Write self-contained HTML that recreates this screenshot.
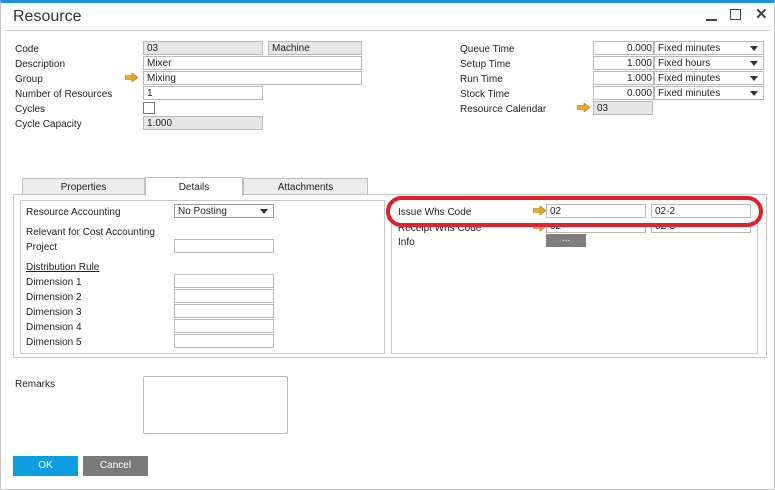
<!DOCTYPE html>
<html><head><style>
*{box-sizing:border-box;margin:0;padding:0}
body{width:775px;height:490px;background:#fff;font-family:"Liberation Sans",sans-serif;font-size:10px;color:#222;position:relative;overflow:hidden}
.a{position:absolute;white-space:nowrap}
.l{position:absolute;line-height:12px;margin-top:2px}
.f{position:absolute;height:14px;border:1px solid #b8b8b8;background:#fff;padding:1px 3px 0;line-height:12px}
.g{background:#e6e6e6}
.dd::after{content:"";position:absolute;right:5px;top:4px;border-left:4px solid transparent;border-right:4px solid transparent;border-top:5px solid #333}
.arr{position:absolute;width:13px;height:9px}
</style></head><body>
<div class="a" style="left:0;top:0;width:775px;height:490px;border:1px solid #c8c8c8;border-top:3px solid #1a8fd6"></div>
<div class="a" style="left:13px;top:8px;font-size:16px;color:#333">Resource</div>
<div class="a" style="left:5px;top:30px;width:765px;height:1px;background:#d0d0d0"></div>
<div class="a" style="left:706px;top:19px;width:11px;height:2px;background:#444"></div>
<div class="a" style="left:730px;top:9px;width:11px;height:11px;border:1.5px solid #444"></div>
<div class="a" style="left:755px;top:5px;font-size:15px;font-weight:bold;color:#444">✕</div>

<div class="l" style="left:15px;top:42px">Code</div>
<div class="l" style="left:15px;top:57px">Description</div>
<div class="l" style="left:15px;top:72px">Group</div>
<div class="l" style="left:15px;top:87px">Number of Resources</div>
<div class="l" style="left:15px;top:102px">Cycles</div>
<div class="l" style="left:15px;top:117px">Cycle Capacity</div>
<div class="f g" style="left:143px;top:41px;width:120px">03</div>
<div class="f g" style="left:268px;top:41px;width:94px">Machine</div>
<div class="f" style="left:143px;top:56px;width:219px">Mixer</div>
<svg class="arr" style="left:125px;top:73px" viewBox="0 0 13 9"><path d="M0 2.5h7V0l6 4.5-6 4.5V6.5H0z" fill="#e8a820" stroke="#a87010" stroke-width=".6"/></svg>
<div class="f" style="left:143px;top:71px;width:219px">Mixing</div>
<div class="f" style="left:143px;top:86px;width:120px">1</div>
<div class="f" style="left:143px;top:102px;width:12px;height:12px;border-color:#777"></div>
<div class="f g" style="left:143px;top:116px;width:120px">1.000</div>

<div class="l" style="left:460px;top:42px">Queue Time</div>
<div class="l" style="left:460px;top:57px">Setup Time</div>
<div class="l" style="left:460px;top:72px">Run Time</div>
<div class="l" style="left:460px;top:87px">Stock Time</div>
<div class="l" style="left:460px;top:102px">Resource Calendar</div>
<div class="f" style="left:593px;top:41px;width:61px;text-align:right;padding-right:1px">0.000</div>
<div class="f" style="left:593px;top:56px;width:61px;text-align:right;padding-right:1px">1.000</div>
<div class="f" style="left:593px;top:71px;width:61px;text-align:right;padding-right:1px">1.000</div>
<div class="f" style="left:593px;top:86px;width:61px;text-align:right;padding-right:1px">0.000</div>
<div class="f dd" style="left:654px;top:41px;width:110px">Fixed minutes</div>
<div class="f dd" style="left:654px;top:56px;width:110px">Fixed hours</div>
<div class="f dd" style="left:654px;top:71px;width:110px">Fixed minutes</div>
<div class="f dd" style="left:654px;top:86px;width:110px">Fixed minutes</div>
<svg class="arr" style="left:577px;top:103px" viewBox="0 0 13 9"><path d="M0 2.5h7V0l6 4.5-6 4.5V6.5H0z" fill="#e8a820" stroke="#a87010" stroke-width=".6"/></svg>
<div class="f g" style="left:593px;top:101px;width:60px">03</div>

<div class="a" style="left:13px;top:194px;width:754px;height:164px;border:1px solid #c8c8c8"></div>
<div class="a" style="left:22px;top:178px;width:123px;height:17px;background:#ececec;border:1px solid #c0c0c0;text-align:center;line-height:17px">Properties</div>
<div class="a" style="left:145px;top:177px;width:98px;height:19px;background:#fff;border:1px solid #c0c0c0;border-bottom:none;text-align:center;line-height:19px">Details</div>
<div class="a" style="left:243px;top:178px;width:125px;height:17px;background:#ececec;border:1px solid #c0c0c0;text-align:center;line-height:17px">Attachments</div>
<div class="a" style="left:20px;top:200px;width:365px;height:154px;border:1px solid #c8c8c8"></div>
<div class="a" style="left:391px;top:200px;width:367px;height:154px;border:1px solid #c8c8c8"></div>

<div class="l" style="left:26px;top:205px">Resource Accounting</div>
<div class="f dd" style="left:174px;top:204px;width:100px;border-color:#999">No Posting</div>
<div class="l" style="left:26px;top:225px">Relevant for Cost Accounting</div>
<div class="l" style="left:26px;top:240px">Project</div>
<div class="f" style="left:174px;top:239px;width:100px"></div>
<div class="l" style="left:26px;top:260px;text-decoration:underline">Distribution Rule</div>
<div class="l" style="left:26px;top:275px">Dimension 1</div>
<div class="l" style="left:26px;top:290px">Dimension 2</div>
<div class="l" style="left:26px;top:305px">Dimension 3</div>
<div class="l" style="left:26px;top:320px">Dimension 4</div>
<div class="l" style="left:26px;top:335px">Dimension 5</div>
<div class="f" style="left:174px;top:274px;width:100px"></div>
<div class="f" style="left:174px;top:289px;width:100px"></div>
<div class="f" style="left:174px;top:304px;width:100px"></div>
<div class="f" style="left:174px;top:319px;width:100px"></div>
<div class="f" style="left:174px;top:334px;width:100px"></div>

<div class="l" style="left:398px;top:221px">Receipt Whs Code</div>
<svg class="arr" style="left:533px;top:222px" viewBox="0 0 13 9"><path d="M0 2.5h7V0l6 4.5-6 4.5V6.5H0z" fill="#e8a820" stroke="#a87010" stroke-width=".6"/></svg>
<div class="f" style="left:546px;top:219px;width:100px">02</div>
<div class="f" style="left:651px;top:219px;width:100px">02-3</div>
<div class="l" style="left:398px;top:235px">Info</div>
<div class="a" style="left:546px;top:234px;width:40px;height:13px;background:#7d7d7d;color:#fff;text-align:center;line-height:9px">...</div>
<div class="a" style="left:386px;top:196px;width:377px;height:31px;border:4px solid #e0202a;border-radius:16px;background:#fff"></div>
<div class="l" style="left:398px;top:205px">Issue Whs Code</div>
<svg class="arr" style="left:533px;top:206px" viewBox="0 0 13 9"><path d="M0 2.5h7V0l6 4.5-6 4.5V6.5H0z" fill="#e8a820" stroke="#a87010" stroke-width=".6"/></svg>
<div class="f" style="left:546px;top:204px;width:100px">02</div>
<div class="f" style="left:651px;top:204px;width:100px">02-2</div>

<div class="l" style="left:15px;top:377px">Remarks</div>
<div class="a" style="left:143px;top:376px;width:145px;height:58px;border:1px solid #b8b8b8;border-radius:2px"></div>
<div class="a" style="left:13px;top:456px;width:65px;height:20px;background:#0e9de0;color:#fff;text-align:center;line-height:20px">OK</div>
<div class="a" style="left:83px;top:456px;width:65px;height:20px;background:#7a7a7a;color:#fff;text-align:center;line-height:20px">Cancel</div>
</body></html>
